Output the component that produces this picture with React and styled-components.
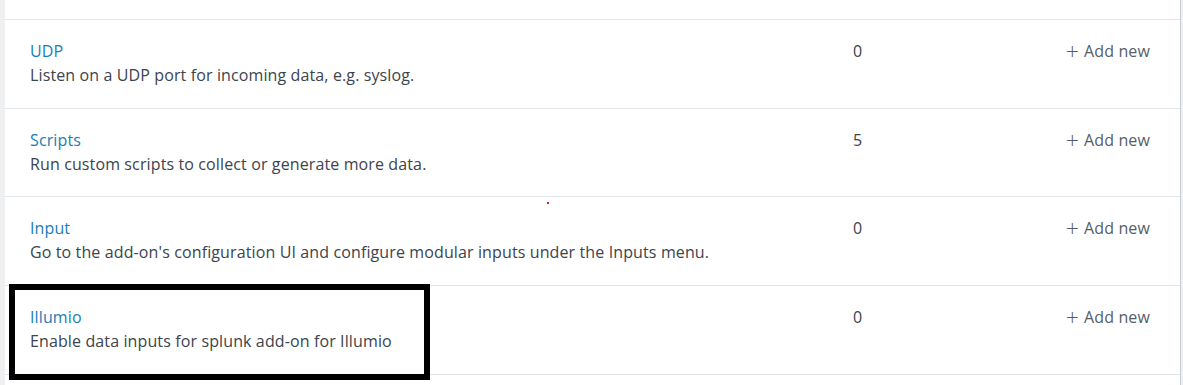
import styled, { createGlobalStyle } from 'styled-components';

const GlobalStyle = createGlobalStyle`
  html, body {
    margin: 0;
    padding: 0;
    background: #eef0f2;
    font-family: "Open Sans", Lato, "Liberation Sans", sans-serif;
  }
`;

const inputs = [
  { name: 'UDP', desc: 'Listen on a UDP port for incoming data, e.g. syslog.', count: 0, height: 89 },
  { name: 'Scripts', desc: 'Run custom scripts to collect or generate more data.', count: 5, height: 88 },
  { name: 'Input', desc: "Go to the add-on's configuration UI and configure modular inputs under the Inputs menu.", count: 0, height: 89, dot: true },
  { name: 'Illumio', desc: 'Enable data inputs for splunk add-on for Illumio', count: 0, height: 89, marked: true },
];

export default function App() {
  return (
    <>
      <GlobalStyle />
      <Page>
        <Table>
          <PrevRow />
          {inputs.map((item) => (
            <Row key={item.name} $height={item.height}>
              <Info>
                <Title href="#">{item.name}</Title>
                <Desc>{item.desc}</Desc>
              </Info>
              <Count>{item.count}</Count>
              <AddNew href="#">
                <Plus>+</Plus>Add new
              </AddNew>
              {item.dot && <Dot />}
              {item.marked && <Highlight />}
            </Row>
          ))}
        </Table>
      </Page>
    </>
  );
}

const Page = styled.div`
  padding-left: 5px;
  width: 1178px;
  height: 385px;
  overflow: hidden;
`;

const Table = styled.div`
  background: #ffffff;
  border-right: 1px solid #c9ccd0;
  width: 1175px;
  min-height: 385px;
`;

const PrevRow = styled.div`
  height: 19px;
  border-bottom: 1px solid #e1e3e6;
`;

const Row = styled.div`
  position: relative;
  display: grid;
  grid-template-columns: 823px 1fr auto;
  align-items: start;
  height: ${(p) => p.$height}px;
  box-sizing: border-box;
  padding: 19px 30px 0 25px;
  border-bottom: 1px solid #e1e3e6;
  color: #3c444d;
  font-size: 16px;
  letter-spacing: 0.12px;
  line-height: 24px;
`;

const Info = styled.div`
  display: flex;
  flex-direction: column;
`;

const Title = styled.a`
  color: #1a7db5;
  text-decoration: none;
  width: max-content;
`;

const Desc = styled.div`
  color: #3c444d;
`;

const Count = styled.div`
  color: #3c444d;
`;

const AddNew = styled.a`
  color: #555e68;
  text-decoration: none;
  display: flex;
  align-items: center;
  gap: 5px;
`;

const Plus = styled.span`
  font-size: 23px;
  font-weight: 300;
  line-height: 24px;
`;

const Dot = styled.span`
  position: absolute;
  left: 542px;
  top: 5px;
  width: 2px;
  height: 2px;
  background: #d0241c;
`;

const Highlight = styled.div`
  position: absolute;
  left: 4px;
  top: -2px;
  width: 409px;
  height: 84px;
  border: 6px solid #000000;
`;
